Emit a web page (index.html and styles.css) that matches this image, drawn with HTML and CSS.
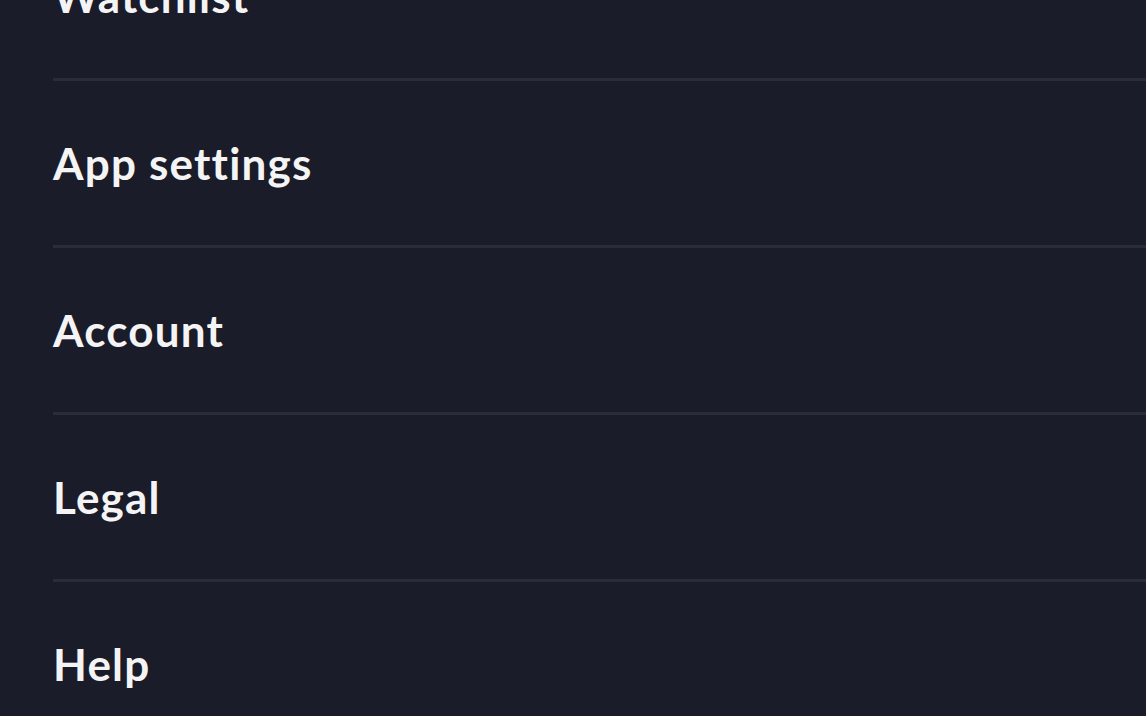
FILE: index.html
```html
<!DOCTYPE html>
<html>
<head>
<meta charset="utf-8">
<title>More</title>
<link rel="stylesheet" href="styles.css">
</head>
<body>
<ul id="menu-list">
	<li><a href="#">Watchlist</a></li>
	<li><a href="#">App settings</a></li>
	<li><a href="#">Account</a></li>
	<li><a href="#">Legal</a></li>
	<li><a href="#">Help</a></li>
</ul>
</body>
</html>
```

FILE: styles.css
```css
body{
	font-family: Lato, 'Noto Sans', sans-serif;
	background-color: #1a1c29;
	margin: 0;
	overflow: hidden;
}
#menu-list{
	margin: -86px 0 0 53px;
	padding: 0;
	list-style: none;
}
#menu-list li{
	height: 164px;
	display: flex;
	align-items: center;
	border-bottom: 3px solid #2a2c39;
}
#menu-list li a{
	color: #f4f4f5;
	text-decoration: none;
	font-size: 44px;
	font-weight: bold;
	letter-spacing: 1.2px;
}
```
